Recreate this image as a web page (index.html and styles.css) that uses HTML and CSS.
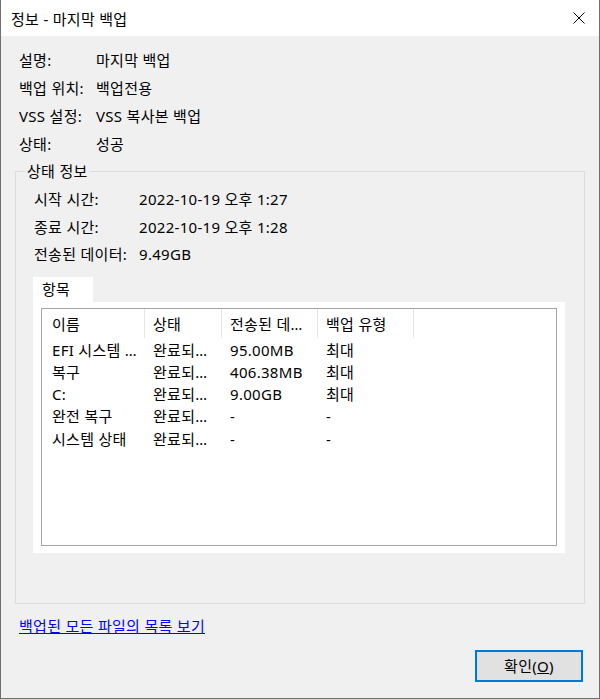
FILE: index.html
```html
<!DOCTYPE html>
<html lang="ko">

<head>
    <meta charset="UTF-8">
    <title>정보 - 마지막 백업</title>
    <link rel="stylesheet" href="styles.css">
</head>

<body>

    <div class="window">

        <div class="titlebar">
            <span class="title">정보 - 마지막 백업</span>
            <svg class="close" width="12" height="12" viewBox="0 0 12 12">
                <path d="M0.5 0.5L11.5 11.5M11.5 0.5L0.5 11.5" stroke="#000" stroke-width="1" fill="none" />
            </svg>
        </div>

        <div class="content">

            <div class="info">
                <span>설명:</span><span>마지막 백업</span>
                <span>백업 위치:</span><span>백업전용</span>
                <span>VSS 설정:</span><span>VSS 복사본 백업</span>
                <span>상태:</span><span>성공</span>
            </div>

            <fieldset class="group">
                <legend>상태 정보</legend>

                <div class="info info-status">
                    <span>시작 시간:</span><span>2022-10-19 오후 1:27</span>
                    <span>종료 시간:</span><span>2022-10-19 오후 1:28</span>
                    <span>전송된 데이터:</span><span>9.49GB</span>
                </div>

                <div class="tab">항목</div>
                <div class="tab-panel">
                    <div class="listview">
                        <div class="lv-row lv-head">
                            <span>이름</span>
                            <span>상태</span>
                            <span>전송된 데…</span>
                            <span>백업 유형</span>
                        </div>
                        <div class="lv-row">
                            <span>EFI 시스템 …</span><span>완료되…</span><span>95.00MB</span><span>최대</span>
                        </div>
                        <div class="lv-row">
                            <span>복구</span><span>완료되…</span><span>406.38MB</span><span>최대</span>
                        </div>
                        <div class="lv-row">
                            <span>C:</span><span>완료되…</span><span>9.00GB</span><span>최대</span>
                        </div>
                        <div class="lv-row">
                            <span>완전 복구</span><span>완료되…</span><span>-</span><span>-</span>
                        </div>
                        <div class="lv-row">
                            <span>시스템 상태</span><span>완료되…</span><span>-</span><span>-</span>
                        </div>
                    </div>
                </div>
            </fieldset>

            <div class="link-row">
                <a href="#" class="link">백업된 모든 파일의 목록 보기</a>
            </div>

            <div class="botoes">
                <button class="btn">확인(<u>O</u>)</button>
            </div>

        </div>
    </div>

</body>

</html>
```

FILE: styles.css
```css
html,
body {
    margin: 0;
    width: 600px;
    height: 699px;
    overflow: hidden;
}

body {
    font-family: "Noto Sans", "Noto Sans CJK KR", sans-serif;
    font-size: 15px;
    letter-spacing: 0.3px;
    color: #000;
    background-color: #f0f0f0;
}

.window {
    box-sizing: border-box;
    height: 699px;
    border: 1px solid #707070;
    border-top: none;
    background-color: #f0f0f0;
}

.titlebar {
    height: 36px;
    display: flex;
    align-items: center;
    justify-content: space-between;
    padding: 0 14px 0 10px;
    background-color: #fff;
}

.close {
    display: block;
}

.content {
    padding: 0 14px;
}

.info {
    display: grid;
    grid-template-columns: 77px auto;
    line-height: 28px;
    margin-top: 10px;
    padding-left: 4px;
}

.group {
    margin: 3px 0 0 0;
    padding: 0 19px 50px 17px;
    border: 1px solid #dcdcdc;
    min-inline-size: 0;
}

.group legend {
    line-height: 20px;
    padding: 0 2px;
    margin-left: -8px;
}

.info-status {
    grid-template-columns: 105px auto;
    line-height: 27.5px;
    margin-top: 0;
    padding-top: 5px;
    padding-left: 1px;
}

.tab {
    width: 60px;
    height: 25px;
    line-height: 25px;
    margin-top: 8px;
    padding-left: 9px;
    box-sizing: border-box;
    background-color: #fff;
}

.tab-panel {
    background-color: #fff;
    padding: 6px 8px 7px 8px;
}

.listview {
    box-sizing: border-box;
    height: 238px;
    border: 1px solid #a0a5ab;
    background-color: #fff;
}

.lv-row {
    display: grid;
    grid-template-columns: 103px 77px 96px 96px;
    line-height: 22.25px;
    white-space: nowrap;
}

.lv-row span {
    padding-left: 8px;
    overflow: hidden;
}

.lv-row span:first-child {
    padding-left: 10px;
}

.lv-head {
    height: 29px;
    line-height: 28px;
    margin-bottom: 1px;
}

.lv-head span {
    padding-top: 1px;
    border-right: 1px solid #e5e5e5;
}

.link-row {
    margin-top: 12px;
    padding-left: 4px;
    line-height: 20px;
}

.link {
    color: #0000ff;
}

.botoes {
    display: flex;
    justify-content: flex-end;
    margin-top: 14px;
    padding-right: 2px;
}

.btn {
    width: 108px;
    height: 32px;
    font-family: inherit;
    font-size: 15px;
    letter-spacing: 0.3px;
    color: #000;
    background-color: #e1e1e1;
    border: 2px solid #0078d7;
    border-radius: 0;
    padding: 0;
}
```
